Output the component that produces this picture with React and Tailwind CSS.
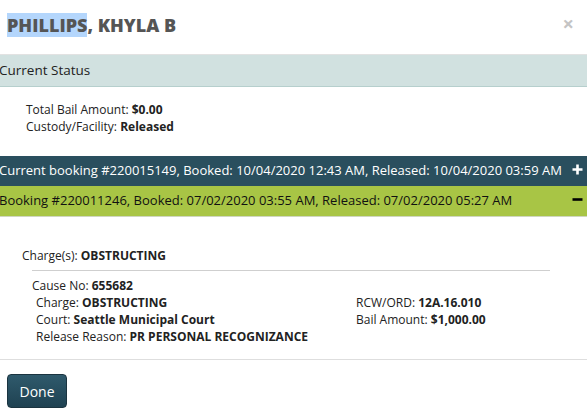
function Plus() {
    return (
        <svg width="11" height="11" viewBox="0 0 11 11" aria-hidden="true">
            <path d="M5.5 0.5v10M0.5 5.5h10" stroke="currentColor" strokeWidth="2.6" />
        </svg>
    );
}

function Minus() {
    return (
        <svg width="11" height="11" viewBox="0 0 11 11" aria-hidden="true">
            <path d="M0.5 5.5h10" stroke="currentColor" strokeWidth="2.6" />
        </svg>
    );
}

export default function App() {
    return (
        <div className="relative h-[415px] w-[587px] overflow-hidden bg-white font-['Open_Sans',sans-serif] text-[12px] text-[#222]">
            <div className="flex h-[55px] items-start justify-between border-b border-[#e2e2e2] pl-[7px] pr-[13px] pt-[13px]">
                <h1 className="text-[18px] font-extrabold leading-[25px] text-[#555]">
                    <span className="bg-[#b4d6fc]">PHILLIPS</span>, KHYLA B
                </h1>
                <span className="mt-[1px] text-[20px] font-bold leading-[20px] text-[#c4c4c4]">×</span>
            </div>

            <div className="flex h-[32px] items-center border-b border-[#b6cfcd] bg-[#d1e1e0] pl-0 text-[13.5px] text-[#222]">
                <span className="-ml-[1px]">Current Status</span>
            </div>

            <div className="pl-[26px] pt-[14px] leading-[17px]">
                <p>
                    Total Bail Amount: <b>$0.00</b>
                </p>
                <p>
                    Custody/Facility: <b>Released</b>
                </p>
            </div>

            <div className="mt-[21px]">
                <div className="flex h-[30px] items-center justify-between whitespace-nowrap bg-[#2a4f5e] pr-[4px] text-[13px] text-white">
                    <span className="-ml-[1px]">
                        Current booking #220015149, Booked: 10/04/2020 12:43 AM, Released: 10/04/2020 03:59 AM
                    </span>
                    <span className="-mt-[4px]">
                        <Plus />
                    </span>
                </div>
                <div className="flex h-[31px] items-center justify-between whitespace-nowrap border-b border-[#cfd6c0] bg-[#a8c545] pr-[4px] text-[13px] text-[#111]">
                    <span className="-ml-[1px]">
                        Booking #220011246, Booked: 07/02/2020 03:55 AM, Released: 07/02/2020 05:27 AM
                    </span>
                    <span className="-mt-[4px] text-black">
                        <Minus />
                    </span>
                </div>
            </div>

            <div className="pt-[30px]">
                <p className="pl-[22px] leading-[18px]">
                    Charge(s): <b>OBSTRUCTING</b>
                </p>
                <div className="ml-[32px] mt-[5px] w-[518px] border-t border-[#cfcfcf]"></div>
                <div className="pl-[32px] pt-[6px] leading-[17px]">
                    <p>
                        Cause No: <b>655682</b>
                    </p>
                    <div className="grid grid-cols-[320px_1fr] pl-[4px]">
                        <div>
                            <p>
                                Charge: <b>OBSTRUCTING</b>
                            </p>
                            <p>
                                Court: <b>Seattle Municipal Court</b>
                            </p>
                            <p>
                                Release Reason: <b>PR PERSONAL RECOGNIZANCE</b>
                            </p>
                        </div>
                        <div>
                            <p>
                                RCW/ORD: <b>12A.16.010</b>
                            </p>
                            <p>
                                Bail Amount: <b>$1,000.00</b>
                            </p>
                        </div>
                    </div>
                </div>
            </div>

            <div className="mt-[14px] border-t border-[#dedede] pl-[7px] pt-[14px]">
                <button
                    type="button"
                    className="flex h-[34px] w-[60px] items-center justify-center rounded-[4px] border border-[#1b3440] bg-gradient-to-b from-[#2f5a6c] to-[#1f4252] text-[14px] text-white"
                >
                    Done
                </button>
            </div>
        </div>
    );
}
